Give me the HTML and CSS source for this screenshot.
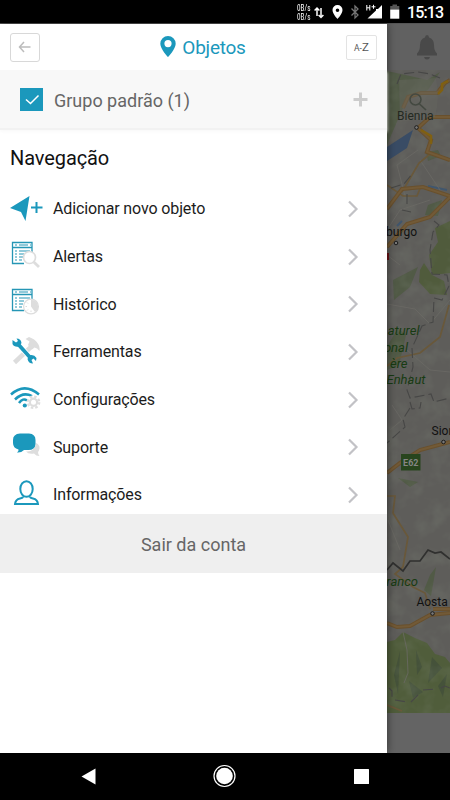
FILE: index.html
```html
<!DOCTYPE html>
<html lang="pt">
<head>
<meta charset="utf-8">
<title>Objetos</title>
<link rel="stylesheet" href="styles.css">
</head>
<body>
<header class="status">
  <span class="speed">0B/s<br>0B/s</span>
  <svg class="status-icons" width="88" height="23" viewBox="312 0 88 23" fill="#fff">
    <path d="M317 16V8.500M314.600 10.500L317 8L319.400 10.500M321 8V17M318.600 15L321 17.500L323.400 15" fill="none" stroke="#fff" stroke-width="1.500"/>
    <path fill-rule="evenodd" d="M337.500 5a5 5 0 0 0-5 5c0 3.700 5 9 5 9s5-5.300 5-9a5 5 0 0 0-5-5zm0 3.400a1.800 1.800 0 1 1 0 3.600 1.800 1.800 0 0 1 0-3.600z"/>
    <path d="M351.500 8.500L358 15L355 18V6L358 9L351.500 15.500" fill="none" stroke="#777" stroke-width="1.300"/>
    <path d="M382 5V18.500H367.500L376 10.500V9H378z"/>
    <path d="M366.800 5V10.500M369.800 5V10.500M366.800 7.800H369.800M371.500 6.800H375.500M373.500 4.800V8.800" fill="none" stroke="#fff"/>
    <path d="M392.500 4.500H397V6H399.300V9.500H390.200V6H392.500z" fill="#555"/><path d="M390.200 9.500H399.300V18.700H390.200z"/>
  </svg>
  <time>15:13</time>
</header>
<div class="stage">
  <main class="drawer">
    <div class="topbar">
      <button class="back" aria-label="Voltar"><svg width="14" height="12" viewBox="0 0 14 12"><path d="M6 1L1.500 6L6 11M1.500 6H12.500" fill="none" stroke="#bcbcbc" stroke-width="1.500"/></svg></button>
      <h1><svg width="16" height="21" viewBox="0 0 16 21"><path fill="#1b98bc" fill-rule="evenodd" d="M8 0a7.700 7.700 0 0 0-7.700 7.700C.3 13 8 21 8 21s7.700-8 7.700-13.300A7.700 7.700 0 0 0 8 0zm0 4a3.600 3.600 0 1 1 0 7.200A3.600 3.600 0 0 1 8 4z"/></svg><span>Objetos</span></h1>
      <button class="sort"><small>A-</small>Z</button>
    </div>
    <div class="group">
      <span class="check"><svg width="24" height="24" viewBox="0 0 24 24"><path d="M6 11.500L10.500 15.500L18.500 7.500" fill="none" stroke="#fff" stroke-width="1.500"/></svg></span>
      <span class="group-name">Grupo padrão (1)</span>
      <svg width="15" height="15" viewBox="0 0 15 15"><path d="M7.500.5V14.500M.5 7.500H14.500" stroke="#ccc" stroke-width="3"/></svg>
    </div>
    <h2>Navegação</h2>
    <nav>
      <a class="item"><svg class="icon" viewBox="0 0 34 34"><path fill="#1b98bc" d="M0 16L19.500 4L15.500 29L11 20z"/><path d="M26.500 10V21M21 15.500H32.500" stroke="#1b98bc" stroke-width="2"/></svg><span class="label">Adicionar novo objeto</span><svg class="chev" viewBox="0 0 12 18"><path d="M2 1.500L9.500 9L2 16.500"/></svg></a>
      <a class="item"><svg class="icon" viewBox="0 0 34 34"><g fill="none" stroke="#2596b5"><path stroke-width="1.300" d="M22 13V2.500H2.500V23.500H14M2.500 7.500H22"/><path stroke-width="1.200" d="M5 5H7M9 5H18M20 5H21M5 11H7M9 11H20M5 14H7M9 14H14M5 17H7M9 17H13M5 20H7M9 20H12"/></g><circle cx="19.500" cy="17.500" r="6" fill="#fff" stroke="#ddd" stroke-width="1.700"/><path d="M23.800 22L29 27" stroke="#ddd" stroke-width="2.800"/></svg><span class="label">Alertas</span><svg class="chev" viewBox="0 0 12 18"><path d="M2 1.500L9.500 9L2 16.500"/></svg></a>
      <a class="item"><svg class="icon" viewBox="0 0 34 34"><g fill="none" stroke="#2596b5"><path stroke-width="1.300" d="M22 13V2.500H2.500V23.500H14M2.500 7.500H22"/><path stroke-width="1.200" d="M5 5H7M9 5H18M20 5H21M5 11H7M9 11H20M5 14H7M9 14H14M5 17H7M9 17H13M5 20H7M9 20H12"/></g><circle cx="21" cy="19.500" r="7.400" fill="#fff" stroke="#ddd" stroke-width="1.200"/><path fill="#ddd" d="M21 19.500V13A6.500 6.500 0 0 1 25 25z"/><path d="M15.500 19.500H17M21 25V23.500M17 23.500L18 22.500M17 15.500L18 16.500" stroke="#ddd"/></svg><span class="label">Histórico</span><svg class="chev" viewBox="0 0 12 18"><path d="M2 1.500L9.500 9L2 16.500"/></svg></a>
      <a class="item"><svg class="icon" viewBox="0 0 34 34"><path d="M4.500 27.500L22 11" stroke="#ddd" stroke-width="4.500"/><path fill="#ddd" d="M15.500 4L19 2Q25 4 27.500 8Q30 11 29.500 16Q27 12.500 24.500 12.500L22 14.500L18 10L19.500 6.500z"/><path d="M8 9L21 23.500" stroke="#fff" stroke-width="5.500"/><path d="M8 9L21 23.500" stroke="#1b98bc" stroke-width="3.700"/><path fill="#1b98bc" d="M2.500 5L6 7.500L8 6L6.500 3.500Q11 3.500 11.500 8L9.500 11.500Q4 12.500 2.500 9zM19 20.500Q24 19 26.500 23L26 26L23.500 23.500L21.500 25L23 28.500Q18.500 28.500 17.500 24z"/></svg><span class="label">Ferramentas</span><svg class="chev" viewBox="0 0 12 18"><path d="M2 1.500L9.500 9L2 16.500"/></svg></a>
      <a class="item"><svg class="icon" viewBox="0 0 34 34"><g fill="none" stroke="#1b98bc" stroke-width="2.500"><path d="M1 11.500Q14.500-.8 29 11.500M5 16.500Q13 8.500 22 13M9 20Q13 14.500 17 17.500"/></g><circle cx="14.800" cy="22.500" r="2.100" fill="#1b98bc"/><circle cx="23.500" cy="19.200" r="5.700" fill="none" stroke="#ddd" stroke-width="2.300" stroke-dasharray="2.500 1.977"/><circle cx="23.500" cy="19.200" r="3.600" fill="#fff" stroke="#ddd" stroke-width="2.200"/></svg><span class="label">Configurações</span><svg class="chev" viewBox="0 0 12 18"><path d="M2 1.500L9.500 9L2 16.500"/></svg></a>
      <a class="item"><svg class="icon" viewBox="0 0 34 34"><path fill="#ddd" d="M26 13Q30 15 29.500 18.500Q29 21 28 22Q28 24.500 29.500 26Q26 26 24 23.500Q18.500 24.500 16 21.500Q25 22 26 13z"/><path fill="#1b98bc" d="M10 3.500H19Q25.500 4 25.500 10V14Q25 20 18.500 20H14Q11 23 7 22.500Q9 21 8.500 19.500Q3 18 3 13V10Q3 4 10 3.500z"/></svg><span class="label">Suporte</span><svg class="chev" viewBox="0 0 12 18"><path d="M2 1.500L9.500 9L2 16.500"/></svg></a>
      <a class="item"><svg class="icon" viewBox="0 0 34 34"><g fill="none" stroke="#1b98bc" stroke-width="2"><ellipse cx="16.500" cy="11" rx="6.200" ry="7.800"/><path d="M13 18.500Q13 20 10 20.500Q5.500 21.500 5 26H28Q27.500 21.500 23 20.500Q20 20 20 18.500"/></g></svg><span class="label">Informações</span><svg class="chev" viewBox="0 0 12 18"><path d="M2 1.500L9.500 9L2 16.500"/></svg></a>
    </nav>
    <button class="logout">Sair da conta</button>
  </main>
  <aside class="behind">
    <div class="bell"><svg width="22" height="25" viewBox="0 0 22 25" fill="#494949"><path d="M11 0Q13 0 13 2.500Q18 4 18 10Q18 16 21 18.500V20.500H1V18.500Q4 16 4 10Q4 4 9 2.500Q9 0 11 0zM8 22H14Q13.500 24.500 11 24.500T8 22z"/></svg></div>
    <svg class="map" width="63" height="643" viewBox="387 70 63 643">
      <defs><filter id="terrain" x="0" y="0" width="100%" height="100%"><feTurbulence type="fractalNoise" baseFrequency=".06" numOctaves="3" seed="4"/><feColorMatrix values="0 0 0 0 .22  0 0 0 0 .25  0 0 0 0 .2  0 2.500 0 0 -1.050"/></filter></defs>
      <path fill="#5e5d5a" d="M387 70h63v643h-63z"/>
      <g fill="#515a46"><path d="M387 71L410 76L427 80L440 72L428 90L410 98L402 110L387 145zM426 152L438 150L441 156L428 161zM428 205L442 200L438 216L425 215zM393 280L418 267L410 287L394 300zM388 345L398 328L406 335L399 365L387 370zM430 575L436 567L431 596L424 590zM398 478L418 482L410 487z"/><path fill="#505b3c" d="M435 228L450 221V273L432 275L429 255L438 242zM420 270L424 263L432 275L444 281L447 295L430 294L419 282z"/><path fill="#505d3b" d="M387 642L395 640L403 632L415 638L427 643L435 654L445 657L450 663V713H387z"/></g>
      <path fill="#45523a" d="M394 675L400 651L398 694zM416 650L422 667L417 675zM432 657L442 668L428 683zM409 681L423 692L413 698zM438 686L447 674L443 697z"/>
      <rect x="387" y="70" width="63" height="643" filter="url(#terrain)" opacity=".2"/>
      <path fill="#394c65" d="M387 147L413 130L407 148L387 161z"/>
      <path d="M428 186L447 190M397 226L402 221" stroke="#40566d" stroke-width="2"/>
      <g fill="none" stroke="#6b6965" stroke-width=".8"><path d="M405 196L397 165L418 150M420 160L440 190M387 230L400 210L430 200M387 304L415 309L430 324L450 300M387 255L400 265M403 632L407 650L408 673L404 683M388 520L400 550M407 350L430 370L450 372M392 405L402 420L390 430"/></g>
      <g fill="none" stroke="#69583a" stroke-width="1.700"><path d="M387 366L397 358L420 353L440 337L449 305M387 496H395L393 513L408 537L403 567L395 574L413 587L425 593L430 609M402 192L419 163L430 154M387 185L403 196H417L421 186M387 705L402 711"/></g>
      <g fill="none" stroke="#69502d" stroke-width="4"><path d="M403 108L408 97L421 93H437L445 83L450 80M450 117H430L418 128L431 140L427 152L450 160M387 209L402 189L423 187L450 196M387 247L407 224L430 217L450 197M387 473L400 463L420 450L450 442M387 623L397 627L410 626L430 615L450 613M433 609H450"/></g>
      <g fill="none" stroke="#725a37" stroke-width="2"><path d="M403 108L408 97L421 93H437L445 83L450 80M450 117H430L418 128L431 140L427 152L450 160M387 209L402 189L423 187L450 196M387 247L407 224L430 217L450 197M387 473L400 463L420 450L450 442M387 623L397 627L410 626L430 615L450 613M433 609H450"/></g>
      <path d="M438 94L442 90V84L448 81M421 130L431 136V144" fill="none" stroke="#806011" stroke-width="2.500"/>
      <g fill="none" stroke="#474746" stroke-width="1.100" stroke-dasharray="10 4"><path d="M397 84L401 74L418 72L430 74L440 78M407 194V208M402 210L411 212M391 188L404 184L412 174M434 221L439 225L433 232L430 250L432 274L447 275L449 286L442 300L434 298L433 322L422 326L412 348L413 367L407 390L410 398L431 394L434 402L450 398M410 402L412 409L420 408L421 402M410 408L403 419L405 427L387 443"/><path d="M389 688L392 691V699M395 700L407 702M411 702L419 694M423 690L437 689M441 688L445 686L450 688"/></g>
      <path d="M387 570L393 563L403 571L410 561L420 561L428 550L435 553L441 552L450 559" fill="none" stroke="#30302f" stroke-width="1.700"/>
      <path d="M387 253H389V260H387z" fill="#6b1216"/>
      <path d="M399 80L436 78Q440 100 435 117L400 122z" fill="#656560" opacity=".45"/>
      <circle cx="415.500" cy="99.500" r="5.500" fill="none" stroke="#444941" stroke-width="1.500"/><path d="M419.500 104L426 110" stroke="#444941" stroke-width="1.700"/>
      <g fill="#777" stroke="#1b1b1b"><circle cx="416.500" cy="127.500" r="1.800"/><circle cx="396" cy="243" r="1.800"/><circle cx="443.500" cy="442" r="1.800"/><circle cx="432.500" cy="613.500" r="1.800"/></g>
      <g class="place"><text x="397" y="120" fill="#242922">Bienna</text><text x="417" y="236" text-anchor="end">burgo</text><text x="431.500" y="435">Sion</text><text x="416.500" y="606">Aosta</text></g>
      <g class="park"><text x="419.500" y="335" text-anchor="end">aturel</text><text x="408" y="351.500" text-anchor="end">onal</text><text x="407.500" y="367.500" text-anchor="end">ère</text><text x="425.500" y="384" text-anchor="end">Enhaut</text><text x="418" y="586" text-anchor="end">ranco</text></g>
      <path d="M401 454H420.500V470.500H401z" fill="#28451e"/><text class="road-no" x="410.800" y="465.800" text-anchor="middle">E62</text>
    </svg>
    <div class="footer"></div>
  </aside>
</div>
<footer class="keys">
  <svg width="450" height="47" viewBox="0 753 450 47" fill="#fff"><path d="M81.500 776.500L95.500 768.500V784.500z"/><circle cx="224.500" cy="776" r="8.300"/><circle cx="224.500" cy="776" r="10.500" fill="none" stroke="#fff" stroke-width="1.200"/><rect x="354" y="769" width="15" height="15" rx=".5"/></svg>
</footer>
</body>
</html>
```

FILE: styles.css
```css
* { box-sizing: border-box; }
body { margin: 0; width: 450px; height: 800px; overflow: hidden; display: flex; flex-direction: column; font-family: Roboto, sans-serif; background: #000; }
button { font-family: inherit; padding: 0; margin: 0; }
.status { height: 23px; flex: none; display: flex; align-items: center; color: #fff; }
.speed { width: 15px; margin-left: 297px; font: 400 9px/9px "Roboto Condensed", Roboto, sans-serif; margin-top: 2px; white-space: nowrap; transform: scaleX(.8); transform-origin: left; }
.status-icons { flex: none; }
.status time { margin-left: 7px; font-size: 16px; font-weight: 500; letter-spacing: -1px; letter-spacing: -.9px; padding-top: 2px; }
.stage { height: 730px; flex: none; display: flex; border-top: 1px solid #555; }
.drawer { width: 387px; flex: none; background: #fff; display: flex; flex-direction: column; z-index: 1; box-shadow: 0 0 9px rgba(0,0,0,.5); }
.topbar { height: 46px; flex: none; display: flex; align-items: center; justify-content: space-between; padding: 0 10px; }
.back { width: 30px; height: 29px; border: 1px solid #d8d8d8; border-radius: 3px; background: #fff; display: grid; place-items: center; }
h1 { margin: 2px 0 0 20px; display: flex; align-items: center; gap: 6px; font-size: 19px; line-height: 24px; font-weight: 400; letter-spacing: -.25px; color: #1b98bc; }
h1 svg { margin-top: -3px; }
.sort { width: 31px; height: 25px; border: 1px solid #e3e3e3; border-radius: 2px; background: #fff; color: #555; font-size: 11.5px; }
.sort small { font-size: 8.5px; }
.group { height: 60px; flex: none; display: flex; align-items: center; padding: 0 19px 0 20px; background: #f8f8f8; border-bottom: 2px solid #f2f2f2; box-shadow: 0 2px 3px #fafafa; }
.check { width: 23px; height: 23px; background: #1b98bc; display: grid; place-items: center; }
.group-name { flex: 1; margin-left: 11px; padding-top: 2px; font-size: 18px; color: #666; }
h2 { margin: 16px 0 15px 10px; font-size: 20px; line-height: 24px; font-weight: 400; letter-spacing: -.1px; color: #111; }
nav { height: 329px; flex: none; overflow: hidden; }
.item { height: 47.7px; display: flex; align-items: center; padding: 0 28px 0 10px; }
.icon { width: 34px; height: 34px; flex: none; }
.label { flex: 1; margin-left: 9px; font-size: 16px; letter-spacing: -.13px; color: #1c1c1c; }
.chev { width: 12px; height: 18px; fill: none; stroke: #c2c2c6; stroke-width: 2.2; }
.logout { height: 59px; flex: none; border: 0; background: #efefef; color: #666; font-size: 18px; padding-top: 2px; }
.behind { width: 63px; flex: none; display: flex; flex-direction: column; background: #616161; }
.bell { height: 46px; flex: none; display: flex; align-items: center; justify-content: center; padding-left: 17px; }
.map { display: block; flex: none; }
.footer { flex: 1; background: #646464; }
.place { font-size: 12px; fill: #111; }
.park { font-size: 13px; font-style: italic; fill: #183b13; }
.road-no { font-size: 9px; font-weight: 700; fill: #858585; }
.keys { height: 47px; flex: none; }
.keys svg { display: block; }
```
